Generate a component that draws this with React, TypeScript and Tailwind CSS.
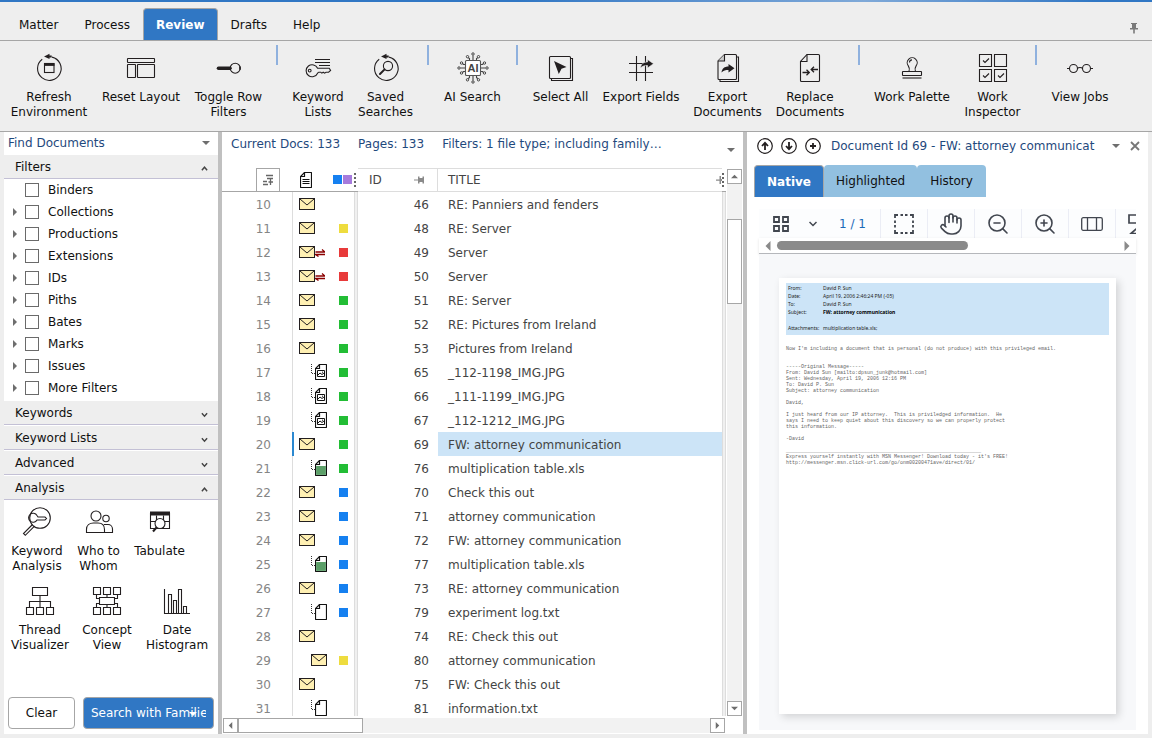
import React from "react";
import { Hand, ZoomIn, ZoomOut } from "lucide-react";
import clsx from "clsx";

interface GlyphProps {
    children: React.ReactNode;
    className?: string;
    box?: string;
}

function Glyph({ children, className = "h-8 w-8", box = "0 0 32 32" }: GlyphProps) {
    return (
        <svg
            viewBox={box}
            className={clsx("shrink-0", className)}
            fill="none"
            stroke="#231f20"
            strokeWidth={1.1}
            aria-hidden="true"
        >
            {children}
        </svg>
    );
}

// ---------- ribbon icons ----------

const ring = (
    <>
        <path d="M19 5.1A11.8 11.8 0 1 1 9.2 7.2" />
        <path d="M11 4.4l5.5-2.6v1.6h2.2v2h-2.2v1.6z" fill="#231f20" stroke="none" />
    </>
);

const RefreshIcon = () => (
    <Glyph>
        {ring}
        <rect x="11.5" y="11.5" width="9.5" height="9" />
        <path d="M11 12.6h10.5" strokeWidth={2.6} />
    </Glyph>
);

const ResetIcon = () => (
    <Glyph>
        <rect x="2.5" y="6.5" width="27" height="4" rx="0.5" />
        <rect x="2.5" y="12.5" width="8" height="13" rx="0.5" />
        <rect x="12.5" y="12.5" width="17" height="13" rx="0.5" />
    </Glyph>
);

const ToggleIcon = () => (
    <Glyph>
        <path d="M5.5 16.2H17" strokeWidth={3.6} strokeLinecap="round" />
        <circle cx="22.2" cy="16.2" r="5" />
        <path d="M27 14.6v3.2" strokeWidth={1.6} />
    </Glyph>
);

const KeyListIcon = () => (
    <Glyph>
        <path d="M13 7.5h15M13 10.5h15M17 13.5h11" />
        <path d="M15.6 16.3A6 6 0 1 0 15.6 21.2l1.2-1h2l1 .9 1.4-.9 1.4.9 1.4-.9h2.6l2-1.7-1.4-2.2z" />
        <circle cx="7.7" cy="18.6" r="1.4" />
    </Glyph>
);

const SavedIcon = () => (
    <Glyph>
        {ring}
        <circle cx="18" cy="14" r="4.6" />
        <path d="M14.6 17.4L10 22" strokeWidth={2} strokeLinecap="round" />
    </Glyph>
);

const AiIcon = () => (
    <Glyph>
        <rect x="8.5" y="8.5" width="15" height="15" rx="1" fill="#fff" stroke="#555" />
        <path
            d="M16 8V3.5M12.5 8V6.5L11 5.5M19.5 8V6.5L21 5.5M16 24v4.5M12.5 24v1.5L11 27M19.5 24v1.5L21 27M8 16H3.5M8 12.5H6.5L5.5 11.5M8 19.5H6.5L5.5 20.5M24 16h4.5M24 12.5h1.5l1-1M24 19.5h1.5l1 1"
            stroke="#444"
        />
        <g stroke="#444" strokeWidth={1} fill="#eee">
            <circle cx="16" cy="2" r="1.2" />
            <circle cx="10.5" cy="4.7" r="1.2" />
            <circle cx="21.5" cy="4.7" r="1.2" />
            <circle cx="16" cy="30" r="1.2" />
            <circle cx="10.5" cy="27.8" r="1.2" />
            <circle cx="21.5" cy="27.8" r="1.2" />
            <circle cx="2" cy="16" r="1.2" />
            <circle cx="4.5" cy="11" r="1.2" />
            <circle cx="4.5" cy="21" r="1.2" />
            <circle cx="30" cy="16" r="1.2" />
            <circle cx="27.5" cy="11" r="1.2" />
            <circle cx="27.5" cy="21" r="1.2" />
        </g>
        <text
            x="16"
            y="20"
            textAnchor="middle"
            fill="#444"
            stroke="none"
            className="font-['Liberation_Sans'] text-[11px] font-bold"
        >
            AI
        </text>
    </Glyph>
);

const SelectAllIcon = () => (
    <Glyph>
        <rect x="4.5" y="4.5" width="21" height="22" rx="1" />
        <path d="M26 6.5h1.5v22h-21v-2" />
        <path d="M9 9l12.5 6-5 1.8L13.8 22z" fill="#231f20" stroke="none" />
    </Glyph>
);

const shareArrow = "M0 8.5C.5 4.5 3 2.5 7 2.5V0l6 4.2-6 4.3V6C4 6 2 6.5 0 8.5z";

const ExportFieldsIcon = () => (
    <Glyph>
        <path d="M4 11.5h24M4 20.5h24M11.5 4v25M20.5 4v25" />
        <path d={shareArrow} transform="translate(15.5 7.5)" fill="#231f20" stroke="#eee" strokeWidth={0.6} />
    </Glyph>
);

const ExportDocsIcon = () => (
    <Glyph>
        <path d="M12.5 2.5h11a1 1 0 0 1 1 1v23a1 1 0 0 1-1 1H7a1 1 0 0 1-1-1V9z" />
        <path d="M12.5 2.5V9H6" fill="#ccc" />
        <path d="M24.5 5h2v24.5H8v-2" />
        <path d={shareArrow} transform="translate(9.5 12)" fill="#231f20" stroke="none" />
    </Glyph>
);

const ReplaceIcon = () => (
    <Glyph>
        <path d="M13 2.5h11.5a1 1 0 0 1 1 1v25a1 1 0 0 1-1 1H7.5a1 1 0 0 1-1-1V9.5z" />
        <path d="M13 2.5v7H6.5" />
        <path
            d="M8.5 20.5H15M12.5 17.8l2.8 2.7-2.8 2.7M24 17.5h-6.5M20 14.8l-2.8 2.7 2.8 2.7"
            strokeWidth={1.3}
        />
    </Glyph>
);

const StampIcon = () => (
    <Glyph>
        <path d="M13 19.5c.8-3 .5-4-.7-5.6a5 5 0 1 1 7.8 0c-1.2 1.6-1.500 2.6-.7 5.6" />
        <path d="M13.5 10.5c0-1.5 1-2.5 2.5-2.6" />
        <rect x="6.5" y="19.5" width="19" height="4" rx="0.5" />
        <path d="M6.5 26h19" />
    </Glyph>
);

const InspectorIcon = () => (
    <Glyph>
        <path d="M2.5 2.5h12v12h-12zM17.5 2.5h12v12h-12zM2.5 17.5h12v12h-12zM17.5 17.5h12v12h-12z" />
        <path d="M6 8.5l2 2 4-4M6 23.5l2 2 4-4M21 23.5l2 2 4-4" />
    </Glyph>
);

const GlassesIcon = () => (
    <Glyph>
        <circle cx="9.5" cy="16.5" r="4" />
        <circle cx="22.5" cy="16.5" r="4" />
        <path d="M13.5 16.5c.8-1.3 4.2-1.3 5 0M3 16.5h2.5M26.5 16.5H29" />
    </Glyph>
);

// ---------- analysis icons ----------

const KeywordAnalysisIcon = () => (
    <Glyph>
        <circle cx="19" cy="12" r="10.3" />
        <path d="M16 9.5a4.5 4.5 0 1 0 0 4.5h8l1.5-1.5L24 11h-7z" />
        <path d="M11.5 18.5l-9 9 1.8 1.8 9.2-9.2" />
    </Glyph>
);

const PeopleIcon = () => (
    <Glyph>
        <circle cx="13" cy="10" r="5" />
        <circle cx="23" cy="12.5" r="3.2" />
        <path d="M3.5 26.5v-3c0-4 3-6.5 7-6.5H15c4 0 6.5 2.5 6.5 6.5v3zM21 18.5h4c2.5 0 4.5 2 4.5 4.5v3.5h-8" />
    </Glyph>
);

const TabulateIcon = () => (
    <Glyph>
        <path d="M6 7.5h20" strokeWidth={4} />
        <path d="M6.5 7v15.5h19V7M6.5 15.5h19M12.5 9.5v13M19.5 9.5v13" />
        <circle cx="16" cy="17.5" r="5" fill="#fff" />
        <path d="M12.5 21.5L9 25.5" strokeWidth={2} />
    </Glyph>
);

const ThreadIcon = () => (
    <Glyph>
        <path d="M8.5 2.5h15v8h-15zM2.5 22.5h7v7h-7zM12.5 22.5h7v7h-7zM22.5 22.5h7v7h-7zM16 10.5v12M5.5 22.5v-6h21v6" />
    </Glyph>
);

const ConceptIcon = () => (
    <Glyph>
        <path d="M2.5 2.5h7v7h-7zM12.5 2.5h7v7h-7zM22.5 2.5h7v7h-7zM2.5 22.5h7v7h-7zM12.5 22.5h7v7h-7zM22.5 22.5h7v7h-7zM8.5 12.5h15v7h-15zM16 9.5v3M16 19.5v3M5.5 9.5v4h3M26.5 9.5v4h-3M5.5 22.5v-4h3M26.5 22.5v-4h-3" />
    </Glyph>
);

const HistogramIcon = () => (
    <Glyph>
        <path d="M3.5 4v24.5H29M7.5 28.5v-19h3v19M12.5 28.5v-13h3v13M17.5 28.5v-24h3v24M22.5 28.5v-7h3v7" />
    </Glyph>
);

// ---------- small shapes ----------

type Dir = "up" | "down" | "left" | "right";

const triangles: Record<Dir, string> = {
    up: "M0 6L4 2l4 4z",
    down: "M0 2l4 4 4-4z",
    left: "M6 0L2 4l4 4z",
    right: "M2 0l4 4-4 4z",
};

function Tri({ dir, className = "h-2 w-2 fill-[#6e6e6e]" }: { dir: Dir; className?: string }) {
    return (
        <svg viewBox="0 0 8 8" className={clsx("shrink-0", className)} aria-hidden="true">
            <path d={triangles[dir]} />
        </svg>
    );
}

function MailIcon() {
    return (
        <svg viewBox="0 0 16 12" className="h-3 w-4 shrink-0" fill="#fff0b3" stroke="#231f20" aria-hidden="true">
            <rect x="0.5" y="0.5" width="15" height="11" />
            <path d="M1 1l7 6 7-6" />
        </svg>
    );
}

function DocIcon({ kind }: { kind: "image" | "sheet" | "blank" | "lines" }) {
    return (
        <svg viewBox="0 0 12 16" className="h-4 w-3 shrink-0" fill="none" stroke="#111" aria-hidden="true">
            <path
                d="M4.5.5H11a.5.5 0 0 1 .5.5v14a.5.5 0 0 1-.5.5H1a.5.5 0 0 1-.5-.5V4.5z"
                fill="#fff"
                strokeWidth={1.2}
            />
            <path d="M4.5.5v4h-4" strokeWidth={1.2} />
            {kind === "sheet" && <path d="M1.1 6h9.8v8.9H1.1z" fill="#5b9f68" stroke="none" />}
            {kind === "image" && <path d="M2.5 6.5h7v6h-7zM3 11l2-2 2 1.5 2-1.5M7 8.2h1" />}
            {kind === "lines" && <path d="M2.5 7.5h7M2.5 9.5h7M2.5 11.5h7" />}
        </svg>
    );
}

function ChildLine() {
    return (
        <svg viewBox="0 0 4 16" className="h-4 w-1 shrink-0" stroke="#333" strokeDasharray="1 1" aria-hidden="true">
            <path d="M.5 0v9M1 9.5h3" fill="none" />
        </svg>
    );
}

function LinkArrows() {
    return (
        <svg viewBox="0 0 10 10" className="h-2.5 w-2.5 shrink-0" stroke="#8b0000" fill="none" aria-hidden="true">
            <path d="M.5 5H10L7 2.5M10 7.5H.5l3 2" strokeWidth={1.3} />
        </svg>
    );
}

// ---------- data ----------

const menu = ["Matter", "Process", "Review", "Drafts", "Help"];

interface Tool {
    label: string;
    icon: React.ReactNode;
    width: string;
}

const groups: Tool[][] = [
    [
        { label: "Refresh Environment", icon: <RefreshIcon />, width: "w-[90px]" },
        { label: "Reset Layout", icon: <ResetIcon />, width: "w-[94px]" },
        { label: "Toggle Row Filters", icon: <ToggleIcon />, width: "w-[81px]" },
    ],
    [
        { label: "Keyword Lists", icon: <KeyListIcon />, width: "w-[66px]" },
        { label: "Saved Searches", icon: <SavedIcon />, width: "w-[69px]" },
    ],
    [{ label: "AI Search", icon: <AiIcon />, width: "w-[73px]" }],
    [
        { label: "Select All", icon: <SelectAllIcon />, width: "w-[71px]" },
        { label: "Export Fields", icon: <ExportFieldsIcon />, width: "w-[90px]" },
        { label: "Export Documents", icon: <ExportDocsIcon />, width: "w-[83px]" },
        { label: "Replace Documents", icon: <ReplaceIcon />, width: "w-[82px]" },
    ],
    [
        { label: "Work Palette", icon: <StampIcon />, width: "w-[90px]" },
        { label: "Work Inspector", icon: <InspectorIcon />, width: "w-[71px]" },
    ],
    [{ label: "View Jobs", icon: <GlassesIcon />, width: "w-[72px]" }],
];

const analysis: Tool[][] = [
    [
        { label: "Keyword Analysis", icon: <KeywordAnalysisIcon />, width: "w-[66px]" },
        { label: "Who to Whom", icon: <PeopleIcon />, width: "w-[57px]" },
        { label: "Tabulate", icon: <TabulateIcon />, width: "w-[65px]" },
    ],
    [
        { label: "Thread Visualizer", icon: <ThreadIcon />, width: "w-[72px]" },
        { label: "Concept View", icon: <ConceptIcon />, width: "w-[62px]" },
        { label: "Date Histogram", icon: <HistogramIcon />, width: "w-[78px]" },
    ],
];

const filters = [
    "Binders",
    "Collections",
    "Productions",
    "Extensions",
    "IDs",
    "Piths",
    "Bates",
    "Marks",
    "Issues",
    "More Filters",
];

type Kind = "mail" | "linked" | "childMail" | "image" | "sheet" | "blank";

const marks = {
    yellow: "bg-[#eedc3e]",
    red: "bg-[#e83a3a]",
    green: "bg-[#22bd35]",
    blue: "bg-[#1580f0]",
    none: "",
};

const rows: [number, Kind, keyof typeof marks, number, string][] = [
    [10, "mail", "none", 46, "RE: Panniers and fenders"],
    [11, "mail", "yellow", 48, "RE: Server"],
    [12, "linked", "red", 49, "Server"],
    [13, "linked", "red", 50, "Server"],
    [14, "mail", "green", 51, "RE: Server"],
    [15, "mail", "green", 52, "RE: Pictures from Ireland"],
    [16, "mail", "green", 53, "Pictures from Ireland"],
    [17, "image", "green", 65, "_112-1198_IMG.JPG"],
    [18, "image", "green", 66, "_111-1199_IMG.JPG"],
    [19, "image", "green", 67, "_112-1212_IMG.JPG"],
    [20, "mail", "green", 69, "FW: attorney communication"],
    [21, "sheet", "green", 76, "multiplication table.xls"],
    [22, "mail", "blue", 70, "Check this out"],
    [23, "mail", "blue", 71, "attorney communication"],
    [24, "mail", "blue", 72, "FW: attorney communication"],
    [25, "sheet", "blue", 77, "multiplication table.xls"],
    [26, "mail", "blue", 73, "RE: attorney communication"],
    [27, "blank", "blue", 79, "experiment log.txt"],
    [28, "mail", "none", 74, "RE: Check this out"],
    [29, "childMail", "yellow", 80, "attorney communication"],
    [30, "mail", "none", 75, "FW: Check this out"],
    [31, "blank", "none", 81, "information.txt"],
];

const selectedId = 69;

const mailHeader = [
    ["From:", "David P. Sun"],
    ["Date:", "April 19, 2006 2:46:24 PM (-05)"],
    ["To:", "David P. Sun"],
    ["Subject:", "FW: attorney communication"],
    ["Attachments:", "multiplication table.xls;"],
];

const mailBody = `Now I'm including a document that is personal (do not produce) with this privileged email.


-----Original Message-----
From: David Sun [mailto:dpsun_junk@hotmail.com]
Sent: Wednesday, April 19, 2006 12:16 PM
To: David P. Sun
Subject: attorney communication

David,

I just heard from our IP attorney.  This is priviledged information.  He
says I need to keep quiet about this discovery so we can properly protect
this information.

-David

_________________________________________________________________
Express yourself instantly with MSN Messenger! Download today - it's FREE!
http://messenger.msn.click-url.com/go/onm00200471ave/direct/01/`;

// ---------- sections ----------

function ToolButton({ tool }: { tool: Tool }) {
    return (
        <button type="button" className={clsx("flex shrink-0 flex-col items-center gap-1.5 leading-[15px]", tool.width)}>
            {tool.icon}
            <span>{tool.label}</span>
        </button>
    );
}

function Ribbon() {
    return (
        <header className="shrink-0 border-b border-[#a6a6a6]">
            <div className="h-0.5 bg-linear-to-r from-[#3077c4] from-45% via-[#7fa9d8] via-75% to-[#3077c4] to-95%" />
            <nav className="flex items-end border-b border-[#a6a6a6] pt-1.5 pl-1.5">
                {menu.map((item) => (
                    <a
                        key={item}
                        href="#"
                        className={clsx(
                            "flex h-8 items-center rounded-t border border-b-0 px-3",
                            item === "Review" ? "border-[#a6a6a6] bg-[#3077c4] font-bold text-white" : "border-transparent"
                        )}
                    >
                        {item}
                    </a>
                ))}
                <button type="button" aria-label="Pin ribbon" className="mr-3 mb-1.5 ml-auto">
                    <svg viewBox="0 0 12 12" className="h-3 w-3 fill-[#7a7a7a]" aria-hidden="true">
                        <path d="M3 1h6v1H8v4h2v1.5H2V6h2V2H3zM5.2 7.500h1.600V11.500H5.200z" />
                    </svg>
                </button>
            </nav>
            <div className="flex h-[90px] overflow-hidden pt-1 pl-1">
                {groups.map((group, i) => (
                    <React.Fragment key={i}>
                        {i > 0 && (
                            <div className="flex w-4 shrink-0 justify-center">
                                <div className="h-5 w-0.5 bg-[#8fb1de]" />
                            </div>
                        )}
                        <div className="flex items-start pt-[7px]">
                            {group.map((tool) => (
                                <ToolButton key={tool.label} tool={tool} />
                            ))}
                        </div>
                    </React.Fragment>
                ))}
            </div>
        </header>
    );
}

function SectionHeader({ title, open = false }: { title: string; open?: boolean }) {
    return (
        <button
            type="button"
            className="flex h-[25px] w-full shrink-0 items-center justify-between border-t border-b border-t-white border-b-[#c3c0d5] bg-[#eee] pr-2.5 pl-[11px]"
        >
            {title}
            <svg viewBox="0 0 8 8" className="mt-1 h-[7px] w-[7px]" fill="none" stroke="#444" strokeWidth={1.6} aria-hidden="true">
                <path d={open ? "M1 6l3-3.5L7 6" : "M1 2.5L4 6l3-3.5"} />
            </svg>
        </button>
    );
}

function Sidebar() {
    return (
        <aside className="flex w-[214px] shrink-0 flex-col bg-white">
            <h2 className="flex h-[22px] shrink-0 items-center justify-between pr-2 pl-1 text-[#1f497d]">
                Find Documents
                <Tri dir="down" />
            </h2>
            <SectionHeader title="Filters" open />
            <ul className="pb-px">
                {filters.map((name, i) => (
                    <li key={name} className="flex h-[22px] items-center pl-[7px]">
                        <span className="w-3.5">
                            {i > 0 && <Tri dir="right" className="h-2 w-2 fill-[#6e6e6e]" />}
                        </span>
                        <label className="flex items-center gap-[9px]">
                            <input type="checkbox" className="h-3.5 w-3.5 appearance-none border border-[#6a6a6a] bg-white" />
                            {name}
                        </label>
                    </li>
                ))}
            </ul>
            <SectionHeader title="Keywords" />
            <SectionHeader title="Keyword Lists" />
            <SectionHeader title="Advanced" />
            <SectionHeader title="Analysis" open />
            <div className="flex flex-col gap-[11px] pt-1.5">
                {analysis.map((line, i) => (
                    <div key={i} className="flex items-start">
                        {line.map((tool) => (
                            <ToolButton key={tool.label} tool={tool} />
                        ))}
                    </div>
                ))}
            </div>
            <div className="mt-auto flex gap-2 px-1 pb-[5px]">
                <button type="button" className="h-8 w-[67px] rounded border border-[#a6a6a6] bg-white">
                    Clear
                </button>
                <button
                    type="button"
                    className="relative h-8 min-w-0 flex-1 rounded border border-[#a6a6a6] bg-[#3077c4] px-[7px] text-left text-white"
                >
                    <span className="block overflow-hidden whitespace-nowrap">Search with Families</span>
                    <Tri dir="down" className="absolute top-3 right-4 h-2 w-2 fill-white" />
                </button>
            </div>
        </aside>
    );
}

function KindCell({ kind }: { kind: Kind }) {
    if (kind === "mail") return <MailIcon />;
    if (kind === "linked")
        return (
            <span className="flex items-center">
                <MailIcon />
                <LinkArrows />
            </span>
        );
    if (kind === "childMail")
        return (
            <span className="pl-3">
                <MailIcon />
            </span>
        );
    return (
        <span className="flex items-center pl-3">
            <ChildLine />
            <DocIcon kind={kind} />
        </span>
    );
}

function ScrollButton({ dir }: { dir: Dir }) {
    return (
        <button
            type="button"
            aria-label={`Scroll ${dir}`}
            className="flex h-[15px] w-[15px] shrink-0 items-center justify-center border border-[#a6a6a6] bg-white"
        >
            <Tri dir={dir} className="h-[7px] w-[7px] fill-[#6e6e6e]" />
        </button>
    );
}

function Dots() {
    return (
        <svg viewBox="0 0 2 14" className="h-3.5 w-0.5 shrink-0" aria-hidden="true">
            <path d="M1 0v14" stroke="#666" strokeWidth={2} strokeDasharray="2 2" />
        </svg>
    );
}

function DocGrid() {
    return (
        <main className="flex min-w-0 flex-[521] flex-col bg-white">
            <div className="flex h-9 shrink-0 justify-between pr-2 pl-[9px] text-[#1f497d]">
                <div className="flex gap-[18px] pt-1 whitespace-nowrap">
                    <span>Current Docs: 133</span>
                    <span>Pages: 133</span>
                    <span>Filters: 1 file type; including family…</span>
                </div>
                <Tri dir="down" className="mt-3.5 h-2 w-2 fill-[#6e6e6e]" />
            </div>
            <div className="flex min-h-0 flex-1">
                <div className="min-w-0 flex-1 overflow-hidden">
                    <table className="w-full table-fixed border-separate border-spacing-0 text-[#444]">
                        <colgroup>
                            <col className="w-[70px]" />
                            <col className="w-[62px]" />
                            <col className="w-1" />
                            <col className="w-20" />
                            <col />
                            <col className="w-1" />
                        </colgroup>
                        <thead>
                            <tr className="h-6">
                                <th className="border-b border-[#a6a6a6] p-0">
                                    <div className="ml-[34px] flex h-[23px] w-6 items-center justify-center border border-b-0 border-[#a6a6a6]">
                                        <svg viewBox="0 0 12 12" className="h-3 w-3" stroke="#666" fill="none" aria-hidden="true">
                                            <path d="M4 1.5h7M5 4.5h6M1 7.5h4M1 10.5h5M8.5 11V4M6.5 8h4.5" strokeWidth={1.3} />
                                        </svg>
                                    </div>
                                </th>
                                <th className="border-b border-[#a6a6a6] p-0">
                                    <div className="flex items-center pl-2">
                                        <DocIcon kind="lines" />
                                        <span className="ml-auto h-[9px] w-[9px] bg-[#1580f0]" />
                                        <span className="mr-0.5 ml-px h-[9px] w-[9px] bg-[#a67bdc]" />
                                    </div>
                                </th>
                                <th className="border-b border-[#a6a6a6] p-0">
                                    <Dots />
                                </th>
                                <th className="border-t border-r border-b border-[#ddd] p-0 font-normal">
                                    <div className="flex items-center justify-between pr-3 pl-[11px]">
                                        ID
                                        <svg viewBox="0 0 11 10" className="h-2.5 w-[11px] fill-[#8a8a8a]" aria-hidden="true">
                                            <path d="M0 4.5h4v-3h1.5V3h3V1.5H10v7H8.5V7h-3v1.5H4v-3H0z" />
                                        </svg>
                                    </div>
                                </th>
                                <th className="border-t border-b border-[#ddd] p-0 font-normal">
                                    <div className="flex items-center justify-between pl-2.5">
                                        TITLE
                                        <svg viewBox="0 0 6 8" className="h-2 w-1.5 fill-[#8a8a8a]" aria-hidden="true">
                                            <path d="M0 3.4h3.500V0H5v3h1v2H5v3H3.500V4.800H0z" />
                                        </svg>
                                    </div>
                                </th>
                                <th className="border-b border-[#a6a6a6] p-0">
                                    <Dots />
                                </th>
                            </tr>
                        </thead>
                        <tbody>
                            {rows.map(([num, kind, mark, id, title]) => (
                                <tr key={num} className="h-6">
                                    <td className="p-0 pt-0.5 pr-[21px] text-right text-[#858585]">{num}</td>
                                    <td
                                        className={clsx(
                                            "p-0",
                                            id === selectedId ? "border-l-2 border-[#2b88d0] pl-[5px]" : "border-l border-[#ddd] pl-1.5"
                                        )}
                                    >
                                        <div className="flex items-center justify-between pr-1.5">
                                            <KindCell kind={kind} />
                                            {mark !== "none" && <span className={clsx("h-[9px] w-[9px]", marks[mark])} />}
                                        </div>
                                    </td>
                                    <td className="border-x border-[#ddd] bg-[#f0f0f0] p-0" />
                                    <td className="p-0 pt-0.5 pr-[9px] text-right">{id}</td>
                                    <td className={clsx("p-0 pt-0.5 pl-2.5", id === selectedId && "bg-[#cce4f7]")}>{title}</td>
                                    <td className="border-x border-[#ddd] bg-[#f0f0f0] p-0" />
                                </tr>
                            ))}
                        </tbody>
                    </table>
                </div>
                <div className="mt-px mr-px ml-px flex w-[15px] shrink-0 flex-col bg-[#f2f2f2]">
                    <ScrollButton dir="up" />
                    <div className="flex-1 pt-[35px]">
                        <div className="h-[85px] border border-[#a6a6a6] bg-white" />
                    </div>
                    <ScrollButton dir="down" />
                </div>
            </div>
            <div className="mt-0.5 mr-[18px] mb-px ml-px flex shrink-0 bg-[#f2f2f2]">
                <ScrollButton dir="left" />
                <div className="flex-1">
                    <div className="h-[15px] w-[125px] border border-[#a6a6a6] bg-white" />
                </div>
                <ScrollButton dir="right" />
            </div>
        </main>
    );
}

const roundButtons = [
    { label: "Previous document", d: "M8 12V5M5 8l3-3.2L11 8" },
    { label: "Next document", d: "M8 4v7M5 8l3 3.2L11 8" },
    { label: "Add", d: "M8 5v6M5 8h6" },
];

function ViewerTool({ label, children }: { label: string; children: React.ReactNode }) {
    return (
        <button
            type="button"
            aria-label={label}
            className="flex w-[47px] shrink-0 items-center justify-center border-l border-[#ebedf5] text-[#41464f]"
        >
            {children}
        </button>
    );
}

function Viewer() {
    return (
        <section className="flex min-w-0 flex-[401] flex-col bg-white pb-1">
            <div className="flex h-[27px] shrink-0 items-center pr-2 pl-2.5">
                <div className="flex gap-2">
                    {roundButtons.map((b) => (
                        <button key={b.label} type="button" aria-label={b.label}>
                            <svg viewBox="0 0 16 16" className="h-4 w-4" fill="none" stroke="#231f20" aria-hidden="true">
                                <circle cx="8" cy="8" r="7.3" strokeWidth={1.2} />
                                <path d={b.d} strokeWidth={1.8} />
                            </svg>
                        </button>
                    ))}
                </div>
                <h2 className="ml-2.5 flex-1 overflow-hidden whitespace-nowrap text-[#1f497d]">
                    Document Id 69 - FW: attorney communicat
                </h2>
                <Tri dir="down" className="ml-3.5 h-2 w-2 fill-[#6e6e6e]" />
                <button type="button" aria-label="Close" className="ml-2.5">
                    <svg viewBox="0 0 10 10" className="h-2.5 w-2.5" stroke="#777" strokeWidth={1.8} aria-hidden="true">
                        <path d="M1 1l8 8M9 1L1 9" />
                    </svg>
                </button>
            </div>
            <div className="mt-1.5 flex h-8 shrink-0 pl-[7px]">
                <button type="button" className="rounded-t border border-b-0 border-[#a6a6a6] bg-[#3077c4] px-3 font-bold text-white">
                    Native
                </button>
                <button type="button" className="rounded-t bg-[#92c0e0] px-3">
                    Highlighted
                </button>
                <button type="button" className="rounded-t bg-[#92c0e0] px-[13px]">
                    History
                </button>
            </div>
            <div className="mt-3 mr-3 ml-3 flex min-h-0 flex-1 flex-col">
                <div className="flex h-[29px] shrink-0 overflow-hidden bg-[#fcfdfe]">
                    <div className="flex w-[121px] shrink-0 items-center pl-3.5">
                        <svg viewBox="0 0 16 16" className="h-4 w-4" fill="none" stroke="#41464f" strokeWidth={1.8} aria-hidden="true">
                            <path d="M1 1h5v5H1zM10 1h5v5h-5zM1 10h5v5H1zM10 10h5v5h-5z" />
                        </svg>
                        <svg viewBox="0 0 8 8" className="ml-5 h-2 w-2" fill="none" stroke="#41464f" strokeWidth={1.5} aria-hidden="true">
                            <path d="M.5 2L4 5.5 7.5 2" />
                        </svg>
                        <span className="ml-[22px] whitespace-nowrap text-[#1b6ab8]">1 / 1</span>
                    </div>
                    <ViewerTool label="Select area">
                        <svg viewBox="0 0 20 20" className="h-5 w-5" fill="none" stroke="currentColor" strokeWidth={1.8} aria-hidden="true">
                            <path d="M1 4V1h3M16 1h3v3M19 16v3h-3M4 19H1v-3M6.5 1h2.500M11 1h2.500M6.500 19H9M11 19h2.500M1 6.500V9M1 11v2.500M19 6.500V9M19 11v2.500" />
                        </svg>
                    </ViewerTool>
                    <ViewerTool label="Pan">
                        <Hand className="h-6 w-6" strokeWidth={1.6} />
                    </ViewerTool>
                    <ViewerTool label="Zoom out">
                        <ZoomOut className="h-6 w-6" strokeWidth={1.6} />
                    </ViewerTool>
                    <ViewerTool label="Zoom in">
                        <ZoomIn className="h-6 w-6" strokeWidth={1.6} />
                    </ViewerTool>
                    <ViewerTool label="Page width">
                        <svg viewBox="0 0 22 14" className="h-3.5 w-[22px]" fill="none" stroke="currentColor" strokeWidth={1.3} aria-hidden="true">
                            <rect x="0.7" y="0.7" width="20.6" height="12.6" rx="1.5" />
                            <path d="M6.5 1v12M15.5 1v12" />
                        </svg>
                    </ViewerTool>
                    <ViewerTool label="Annotate">
                        <svg viewBox="0 0 22 20" className="h-5 w-[22px]" fill="none" stroke="currentColor" strokeWidth={1.7} aria-hidden="true">
                            <path d="M9 9H1V1h20v8M3 19.5l9-8v8z" />
                        </svg>
                    </ViewerTool>
                </div>
                <div className="flex h-4 shrink-0 items-center border-b border-[#b5b7bb] px-1 shadow-sm">
                    <Tri dir="left" className="h-2.5 w-2.5 fill-[#8a8a8a]" />
                    <div className="flex-1 px-1">
                        <div className="h-[9px] w-[56%] rounded-full bg-[#8a8a8a]" />
                    </div>
                    <Tri dir="right" className="h-2.5 w-2.5 fill-[#8a8a8a]" />
                </div>
                <div className="flex min-h-0 flex-1 bg-[#f7f8fa] px-5 pt-6 pb-4">
                    <article className="min-w-0 flex-1 overflow-hidden bg-white px-[7px] pt-[5px] shadow-[3px_3px_8px_rgba(0,0,0,0.15)]">
                        <dl className="bg-[#cce4f7] px-0.5 pt-px pb-px font-['Noto_Sans',sans-serif] text-[5px] leading-[8px] text-[#222]">
                            {mailHeader.map(([name, value]) => (
                                <div key={name} className={clsx("flex", name === "Attachments:" && "mt-2 pb-0.5")}>
                                    <dt className="w-[35px]">{name}</dt>
                                    <dd className={clsx(name === "Subject:" && "font-bold text-black")}>{value}</dd>
                                </div>
                            ))}
                        </dl>
                        <pre className="pt-[11px] font-['Liberation_Mono',monospace] text-[5px] leading-[6px] text-[#666]">
                            {mailBody}
                        </pre>
                    </article>
                </div>
            </div>
        </section>
    );
}

export default function App() {
    return (
        <div className="flex h-screen flex-col overflow-hidden bg-[#eee] font-[Verdana,'DejaVu_Sans',sans-serif] text-[12px] leading-4 text-[#111]">
            <Ribbon />
            <div className="flex min-h-0 flex-1 px-1 pb-1">
                <Sidebar />
                <div className="w-1 shrink-0 bg-[#c0c0c0]" />
                <DocGrid />
                <div className="w-1 shrink-0 bg-[#c0c0c0]" />
                <Viewer />
            </div>
        </div>
    );
}
